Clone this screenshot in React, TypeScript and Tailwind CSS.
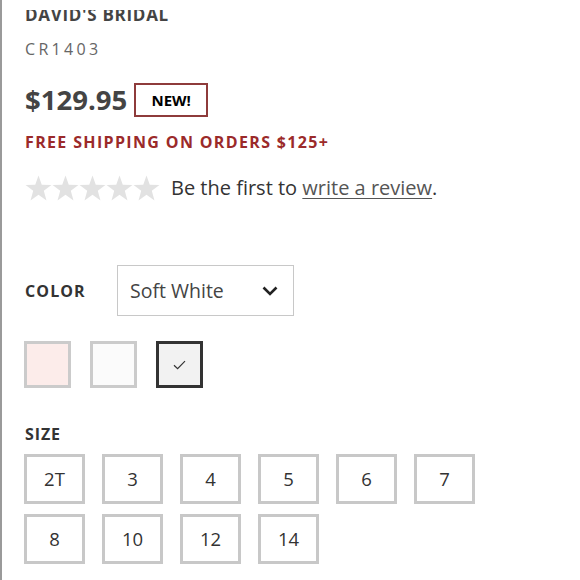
import React from 'react';

const sizes = ['2T', '3', '4', '5', '6', '7', '8', '10', '12', '14'];

const Star = () => (
  <svg width="27" height="27" viewBox="0 0 24 24" className="block">
    <polygon
      points="12,0.5 14.9,8.6 23.5,8.8 16.7,14.1 19.1,22.6 12,17.6 4.9,22.6 7.3,14.1 0.5,8.8 9.1,8.6"
      fill="#e2e2e2"
    />
  </svg>
);

const Swatch = ({ color, selected }: { color: string; selected?: boolean }) => (
  <div
    className={`w-[47px] h-[47px] border-[3px] flex items-center justify-center ${selected ? 'border-[#333]' : 'border-[#cbcbcb]'}`}
    style={{ backgroundColor: color }}
  >
    {selected ? (
      <svg width="13" height="10" viewBox="0 0 13 10">
        <path d="M1 5.2 L4.6 8.6 L12 1.2" fill="none" stroke="#333" strokeWidth="1.2" />
      </svg>
    ) : null}
  </div>
);

export default function App() {
  return (
    <div
      className="w-[580px] h-[580px] overflow-hidden bg-white border-l-2 border-[#9a9a9a] pl-[23px]"
      style={{ fontFamily: '"Open Sans", "Liberation Sans", sans-serif' }}
    >
      {/* brand, clipped at the top like a scrolled page */}
      <div className="mt-[10px] h-[12px] overflow-hidden">
        <div className="-mt-[3px] text-[17px] leading-[15px] font-bold uppercase tracking-[0.7px] text-[#444]">
          David's Bridal
        </div>
      </div>

      <div className="mt-[17px] text-[16px] leading-[20px] tracking-[3.3px] text-[#666]">CR1403</div>

      <div className="mt-[24px] flex items-center h-[34px]">
        <span className="text-[27.5px] leading-[34px] font-bold text-[#444]">$129.95</span>
        <span className="ml-[7px] w-[74px] h-[34px] border-2 border-[#8e3b3b] flex items-center justify-center text-[15px] font-bold text-black">
          NEW!
        </span>
      </div>

      <div className="mt-[15px] text-[16px] leading-[20px] font-bold uppercase tracking-[1.35px] text-[#9b2a2a]">
        Free shipping on orders $125+
      </div>

      <div className="mt-[22px] flex items-center h-[28px]">
        <div className="flex">
          <Star />
          <Star />
          <Star />
          <Star />
          <Star />
        </div>
        <span className="ml-[11px] text-[20px] leading-[28px] text-[#333]">
          Be the first to{' '}
          <a href="#" className="text-[#555] underline underline-offset-[3px] decoration-1">
            write a review
          </a>
          .
        </span>
      </div>

      <div className="mt-[63px] flex items-center h-[51px]">
        <span className="w-[92px] text-[16px] font-bold uppercase tracking-[1.1px] text-[#333]">Color</span>
        <div className="w-[177px] h-[51px] border-[1.5px] border-[#c8c8c8] flex items-center justify-between pl-[12px] pr-[15px]">
          <span className="text-[19.5px] text-[#444]">Soft White</span>
          <svg width="16" height="10" viewBox="0 0 16 10">
            <path d="M1.5 1.5 L8 8 L14.5 1.5" fill="none" stroke="#222" strokeWidth="2.6" />
          </svg>
        </div>
      </div>

      <div className="mt-[25px] -ml-[1px] flex gap-[19px]">
        <Swatch color="#fcecea" />
        <Swatch color="#fbfbfb" />
        <Swatch color="#f2f2f2" selected />
      </div>

      <div className="mt-[36px] text-[16px] leading-[20px] font-bold uppercase tracking-[0.9px] text-[#333]">Size</div>

      <div className="mt-[10px] -ml-[1px] grid grid-cols-[repeat(6,61px)] gap-x-[17px] gap-y-[10px]">
        {sizes.map((s) => (
          <div
            key={s}
            className="h-[50px] border-[3px] border-[#c8c8c8] flex items-center justify-center text-[18.5px] text-[#333]"
          >
            {s}
          </div>
        ))}
      </div>
    </div>
  );
}
